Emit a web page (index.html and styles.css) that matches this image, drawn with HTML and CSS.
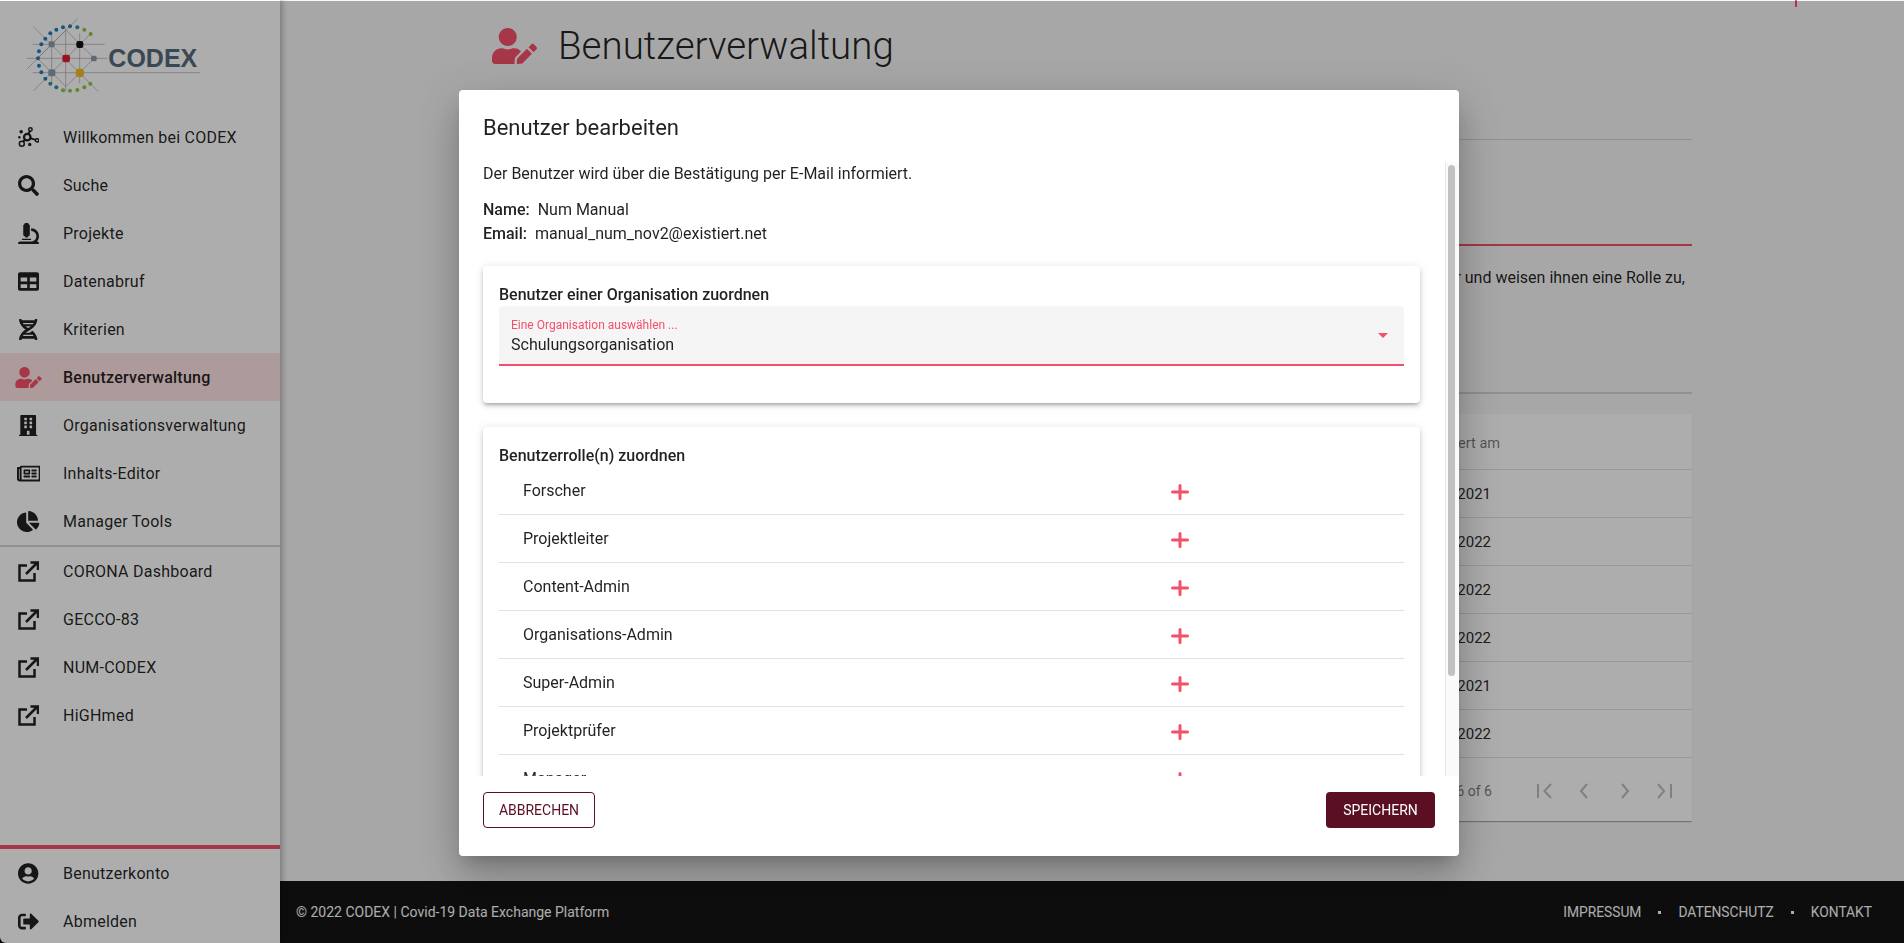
FILE: index.html
```html
<!DOCTYPE html>
<html lang="de">
<head>
<meta charset="utf-8">
<title>Benutzerverwaltung</title>
<link rel="stylesheet" href="styles.css">
</head>
<body>
<svg class="defs" aria-hidden="true">
  <symbol id="i-ext" viewBox="0 0 21 21"><path class="line" d="M9 4.5H1.5V19.5H16.5V12M8 13L19.5 1.5M12.5 1.5H20V9"/></symbol>
  <symbol id="i-plus" viewBox="0 0 18 16"><path class="line-plus" d="M9 1.5v13M1.5 8h15"/></symbol>
  <symbol id="i-useredit" viewBox="0 0 640 512"><path d="M224 256c70.7 0 128-57.3 128-128S294.7 0 224 0 96 57.3 96 128s57.3 128 128 128zm89.6 32h-16.7c-22.2 10.2-46.9 16-72.9 16s-50.6-5.8-72.9-16h-16.7C60.2 288 0 348.2 0 422.4V464c0 26.5 21.5 48 48 48h274.9c-2.4-6.8-3.4-14-2.6-21.3l6.8-60.9 1.2-11.1 7.9-7.9 77.3-77.3c-24.5-27.7-60-45.5-99.9-45.5zm45.3 145.3l-6.8 61c-1.1 10.2 7.5 18.8 17.6 17.6l60.9-6.8 137.9-137.9-71.7-71.7-137.9 137.8zM633 268.9L595.1 231c-9.3-9.3-24.5-9.3-33.8 0l-37.8 37.8-4.1 4.1 71.8 71.7 41.8-41.8c9.3-9.4 9.3-24.5 0-33.9z"/></symbol>
</svg>

<div class="app">
  <aside class="sidebar">
    <div class="logo">
      <svg class="logo-svg" viewBox="0 0 570 255">
        <g class="logo-lines">
          <path d="M38 88H254M20 130H262M38 173H540M95 60V205M137 40V230M179 55V205M40 35L235 230M172 12L20 163M40 228L212 56M138 45L222 130L138 215L52 130Z"/>
        </g>
        <g class="dot-blue">
          <circle cx="129" cy="37" r="6"/><circle cx="109" cy="44" r="6"/><circle cx="91" cy="55" r="6"/><circle cx="76" cy="71" r="6"/><circle cx="64" cy="88" r="6"/><circle cx="57" cy="109" r="6"/><circle cx="54" cy="130" r="6"/><circle cx="57" cy="152" r="6"/><circle cx="64" cy="172" r="6"/><circle cx="76" cy="191" r="6"/><circle cx="150" cy="34" r="6"/>
        </g>
        <g class="dot-teal">
          <circle cx="172" cy="37" r="6"/><circle cx="91" cy="206" r="6"/><circle cx="109" cy="217" r="6"/>
        </g>
        <g class="dot-green">
          <circle cx="193" cy="44" r="6"/><circle cx="212" cy="57" r="6"/><circle cx="129" cy="226" r="6"/><circle cx="150" cy="227" r="6"/><circle cx="172" cy="225" r="6"/><circle cx="193" cy="217" r="6"/><circle cx="211" cy="206" r="6"/>
        </g>
        <rect class="n-grey" x="86" y="79" width="18" height="18" rx="5"/>
        <rect class="n-black" x="169" y="78" width="21" height="21" rx="7"/>
        <rect class="n-red" x="127" y="119" width="23" height="23" rx="7"/>
        <rect class="n-grey" x="213" y="122" width="17" height="17" rx="5"/>
        <rect class="n-grey" x="85" y="163" width="21" height="21" rx="6"/>
        <rect class="n-yellow" x="167" y="161" width="25" height="25" rx="10"/>
        <text class="logo-text" x="265" y="155">CODEX</text>
      </svg>
    </div>

    <nav class="nav">
      <a class="nav-item">
        <span class="nav-icon">
          <svg class="ico-mol" viewBox="0 0 22 22">
            <path class="mol-line" d="M9.7 10.7L13 2.5M9.7 10.7L20 14M9.7 10.7L4 17"/>
            <circle class="mol-ring" cx="9.7" cy="10.7" r="3.4"/><circle class="mol-ring-s" cx="13" cy="2.7" r="1.8"/><circle class="mol-ring-s" cx="20" cy="14" r="1.8"/><circle class="mol-ring-s" cx="4" cy="17.5" r="2.6"/>
            <circle cx="3.3" cy="5" r="1.9"/><circle cx="1.4" cy="10.7" r="1.3"/><circle cx="12.3" cy="18.3" r="1.8"/>
          </svg>
        </span>Willkommen bei CODEX</a>
      <a class="nav-item">
        <span class="nav-icon"><svg class="ico" viewBox="0 0 512 512"><path d="M505 442.7L405.3 343c-4.5-4.5-10.6-7-17-7H372c27.6-35.3 44-79.7 44-128C416 93.1 322.9 0 208 0S0 93.1 0 208s93.1 208 208 208c48.3 0 92.7-16.4 128-44v16.3c0 6.4 2.5 12.5 7 17l99.7 99.7c9.4 9.4 24.6 9.4 33.9 0l28.3-28.3c9.4-9.4 9.4-24.6.1-34zM208 336c-70.7 0-128-57.2-128-128 0-70.7 57.2-128 128-128 70.7 0 128 57.2 128 128 0 70.7-57.2 128-128 128z"/></svg></span>Suche</a>
      <a class="nav-item">
        <span class="nav-icon"><svg class="ico" viewBox="0 0 512 512"><path d="M160 320h12v16c0 8.84 7.16 16 16 16h40c8.84 0 16-7.16 16-16v-16h12c17.67 0 32-14.33 32-32V64c0-17.67-14.33-32-32-32V16c0-8.84-7.16-16-16-16h-64c-8.84 0-16 7.16-16 16v16c-17.67 0-32 14.33-32 32v224c0 17.67 14.33 32 32 32zm304 128h-1.29C493.24 413.99 512 369.2 512 320c0-105.88-86.12-192-192-192v64c70.58 0 128 57.42 128 128s-57.42 128-128 128H48c-26.51 0-48 21.49-48 48 0 8.84 7.16 16 16 16h480c8.84 0 16-7.16 16-16 0-26.51-21.49-48-48-48zm-360-32h208c4.42 0 8-3.58 8-8v-16c0-4.42-3.58-8-8-8H104c-4.42 0-8 3.58-8 8v16c0 4.42 3.58 8 8 8z"/></svg></span>Projekte</a>
      <a class="nav-item">
        <span class="nav-icon"><svg class="ico" viewBox="0 0 512 512"><path d="M464 32H48C21.49 32 0 53.49 0 80v352c0 26.51 21.49 48 48 48h416c26.51 0 48-21.49 48-48V80c0-26.51-21.49-48-48-48zM224 416H64v-96h160v96zm0-160H64v-96h160v96zm224 160H288v-96h160v96zm0-160H288v-96h160v96z"/></svg></span>Datenabruf</a>
      <a class="nav-item">
        <span class="nav-icon"><svg class="ico" viewBox="0 0 448 512"><path d="M.1 494.1c-1.1 9.5 6.3 17.8 15.9 17.8l32.3.1c8.1 0 14.9-5.9 16-13.9.7-4.9 1.8-11.1 3.4-18.1H380c1.6 6.9 2.9 13.2 3.5 18.1 1.1 8 7.9 14 16 13.9l32.3-.1c9.6 0 17.1-8.3 15.9-17.8-4.6-37.9-25.6-129-118.9-207.7-17.6 12.4-37.1 24.2-58.5 35.4 6.2 4.6 11.4 9.4 17 14.2H159.7c21.3-18.1 47-35.6 78.7-51.4C410.5 199.1 442.1 65.8 447.9 17.9 449 8.4 441.6.1 432 .1L399.6 0c-8.1 0-14.9 5.9-16 13.9-.7 4.9-1.8 11.1-3.4 18.1H67.8c-1.6-7-2.7-13.1-3.4-18.1-1.1-8-7.9-14-16-13.9L16.1.1C6.5.1-1 8.4.1 17.9 5.3 60.8 31.4 171.8 160 256 31.5 340.2 5.3 451.2.1 494.1zM224 219.6c-25.1-13.7-46.4-28.4-64.3-43.6h128.5c-17.8 15.2-39.1 30-64.2 43.6zM355.1 96c-5.8 10.4-12.8 21.1-21 32H114c-8.3-10.9-15.3-21.6-21-32h262.1zM92.9 416c5.8-10.4 12.8-21.1 21-32h219.4c8.3 10.9 15.4 21.6 21.2 32H92.9z"/></svg></span>Kriterien</a>
      <a class="nav-item is-active">
        <span class="nav-icon"><svg class="ico ico-accent"><use href="#i-useredit"/></svg></span>Benutzerverwaltung</a>
      <a class="nav-item">
        <span class="nav-icon"><svg class="ico" viewBox="0 0 448 512"><path d="M436 480h-20V24c0-13.255-10.745-24-24-24H56C42.745 0 32 10.745 32 24v456H12c-6.627 0-12 5.373-12 12v20h448v-20c0-6.627-5.373-12-12-12zM128 76c0-6.627 5.373-12 12-12h40c6.627 0 12 5.373 12 12v40c0 6.627-5.373 12-12 12h-40c-6.627 0-12-5.373-12-12V76zm0 96c0-6.627 5.373-12 12-12h40c6.627 0 12 5.373 12 12v40c0 6.627-5.373 12-12 12h-40c-6.627 0-12-5.373-12-12v-40zm52 148h-40c-6.627 0-12-5.373-12-12v-40c0-6.627 5.373-12 12-12h40c6.627 0 12 5.373 12 12v40c0 6.627-5.373 12-12 12zm76 160h-64v-84c0-6.627 5.373-12 12-12h40c6.627 0 12 5.373 12 12v84zm64-172c0 6.627-5.373 12-12 12h-40c-6.627 0-12-5.373-12-12v-40c0-6.627 5.373-12 12-12h40c6.627 0 12 5.373 12 12v40zm0-96c0 6.627-5.373 12-12 12h-40c-6.627 0-12-5.373-12-12v-40c0-6.627 5.373-12 12-12h40c6.627 0 12 5.373 12 12v40zm0-96c0 6.627-5.373 12-12 12h-40c-6.627 0-12-5.373-12-12V76c0-6.627 5.373-12 12-12h40c6.627 0 12 5.373 12 12v40z"/></svg></span>Organisationsverwaltung</a>
      <a class="nav-item">
        <span class="nav-icon"><svg class="ico" viewBox="0 0 576 512"><path d="M552 64H112c-20.858 0-38.643 13.377-45.248 32H24c-13.255 0-24 10.745-24 24v272c0 30.928 25.072 56 56 56h496c13.255 0 24-10.745 24-24V88c0-13.255-10.745-24-24-24zM48 392V144h16v248c0 4.411-3.589 8-8 8s-8-3.589-8-8zm480 8H111.422c.374-2.614.578-5.283.578-8V112h416v288zM172 280h136c6.627 0 12-5.373 12-12v-96c0-6.627-5.373-12-12-12H172c-6.627 0-12 5.373-12 12v96c0 6.627 5.373 12 12 12zm28-80h80v40h-80v-40zm-40 140v-24c0-6.627 5.373-12 12-12h136c6.627 0 12 5.373 12 12v24c0 6.627-5.373 12-12 12H172c-6.627 0-12-5.373-12-12zm192 0v-24c0-6.627 5.373-12 12-12h104c6.627 0 12 5.373 12 12v24c0 6.627-5.373 12-12 12H364c-6.627 0-12-5.373-12-12zm0-144v-24c0-6.627 5.373-12 12-12h104c6.627 0 12 5.373 12 12v24c0 6.627-5.373 12-12 12H364c-6.627 0-12-5.373-12-12zm0 72v-24c0-6.627 5.373-12 12-12h104c6.627 0 12 5.373 12 12v24c0 6.627-5.373 12-12 12H364c-6.627 0-12-5.373-12-12z"/></svg></span>Inhalts-Editor</a>
      <a class="nav-item">
        <span class="nav-icon"><svg class="ico" viewBox="0 0 544 512"><path d="M527.79 288H290.5l158.03 158.03c6.04 6.04 15.98 6.53 22.19.68 38.7-36.46 65.32-85.61 73.13-140.86 1.34-9.46-6.51-17.85-16.06-17.85zm-15.83-64.8C503.72 103.74 408.26 8.28 288.8.04 279.68-.59 272 7.1 272 16.24V240h223.77c9.14 0 16.82-7.68 16.19-16.8zM224 288V50.71c0-9.55-8.39-17.4-17.84-16.06C86.99 51.49-4.1 155.6.14 280.37 4.5 408.51 114.83 513.59 243.03 511.98c50.4-.63 96.97-16.87 135.26-44.03 7.9-5.6 8.42-17.23 1.57-24.08L224 288z"/></svg></span>Manager Tools</a>
    </nav>

    <nav class="nav nav-external">
      <a class="nav-item"><span class="nav-icon"><svg class="ico-ext"><use href="#i-ext"/></svg></span>CORONA Dashboard</a>
      <a class="nav-item"><span class="nav-icon"><svg class="ico-ext"><use href="#i-ext"/></svg></span>GECCO-83</a>
      <a class="nav-item"><span class="nav-icon"><svg class="ico-ext"><use href="#i-ext"/></svg></span>NUM-CODEX</a>
      <a class="nav-item"><span class="nav-icon"><svg class="ico-ext"><use href="#i-ext"/></svg></span>HiGHmed</a>
    </nav>

    <nav class="nav nav-account">
      <a class="nav-item"><span class="nav-icon"><svg class="ico" viewBox="0 0 496 512"><path d="M248 8C111 8 0 119 0 256s111 248 248 248 248-111 248-248S385 8 248 8zm0 96c48.6 0 88 39.4 88 88s-39.4 88-88 88-88-39.4-88-88 39.4-88 88-88zm0 344c-58.7 0-111.3-26.6-146.5-68.2 18.8-35.4 55.6-59.8 98.5-59.8 2.4 0 4.8.4 7.1 1.1 13 4.2 26.6 6.9 40.9 6.9 14.3 0 28-2.7 40.9-6.9 2.3-.7 4.7-1.1 7.1-1.1 42.9 0 79.7 24.4 98.5 59.8C359.3 421.4 306.7 448 248 448z"/></svg></span>Benutzerkonto</a>
      <a class="nav-item"><span class="nav-icon"><svg class="ico" viewBox="0 0 512 512"><path d="M497 273L329 441c-15 15-41 4.5-41-17v-96H152c-13.3 0-24-10.7-24-24v-96c0-13.3 10.7-24 24-24h136V88c0-21.4 25.9-32 41-17l168 168c9.3 9.4 9.3 24.6 0 34zM192 436v-40c0-6.6-5.4-12-12-12H96c-17.7 0-32-14.3-32-32V160c0-17.7 14.3-32 32-32h84c6.6 0 12-5.4 12-12V76c0-6.6-5.4-12-12-12H96c-53 0-96 43-96 96v192c0 53 43 96 96 96h84c6.6 0 12-5.4 12-12z"/></svg></span>Abmelden</a>
    </nav>
  </aside>

  <div class="main">
    <span class="top-mark"></span>
    <main class="content">
      <header class="page-head">
        <svg class="page-icon"><use href="#i-useredit"/></svg>
        <h1 class="page-title">Benutzerverwaltung</h1>
      </header>
      <div class="tabs"></div>
      <div class="intro">
        <p class="intro-text">Hier verwalten Sie alle registrierten Benutzer, ordnen sie einer Organisation zu, aktivieren oder deaktivieren Benutzer und weisen ihnen eine Rolle zu,</p>
      </div>
      <section class="table">
        <div class="t-head">Aktiviert am</div>
        <div class="t-row">12.11.2021</div>
        <div class="t-row">14.01.2022</div>
        <div class="t-row">20.01.2022</div>
        <div class="t-row">24.02.2022</div>
        <div class="t-row">30.11.2021</div>
        <div class="t-row">08.03.2022</div>
        <div class="t-foot">
          <span class="t-range">1 – 6 of 6</span>
          <svg class="pager" viewBox="0 0 136 16">
            <path d="M1 1V15M14 1L7.5 8L14 15M50 1L44 8L50 15M85 1L91 8L85 15M121 1L127 8L121 15M134 1V15"/>
          </svg>
        </div>
      </section>
    </main>
    <footer class="footer">
      <span>© 2022 CODEX | Covid-19 Data Exchange Platform</span>
      <span class="foot-links">
        <a>IMPRESSUM</a><i class="foot-dot"></i><a>DATENSCHUTZ</a><i class="foot-dot"></i><a>KONTAKT</a>
      </span>
    </footer>
  </div>
</div>

<div class="backdrop"></div>

<div class="dialog" role="dialog">
  <h2 class="dialog-title">Benutzer bearbeiten</h2>
  <div class="dialog-main">
    <div class="dialog-body">
      <p class="notice">Der Benutzer wird über die Bestätigung per E-Mail informiert.</p>
      <div class="user-line"><b>Name:</b>&nbsp; Num Manual</div>
      <div class="user-line"><b>Email:</b>&nbsp; manual_num_nov2@existiert.net</div>

      <section class="card card-org">
        <h3 class="card-title">Benutzer einer Organisation zuordnen</h3>
        <div class="select">
          <div class="select-text">
            <div class="select-label">Eine Organisation auswählen ...</div>
            <div class="select-value">Schulungsorganisation</div>
          </div>
          <span class="select-arrow"></span>
        </div>
      </section>

      <section class="card card-roles">
        <h3 class="card-title">Benutzerrolle(n) zuordnen</h3>
        <div class="role"><span class="role-name">Forscher</span><svg class="role-plus"><use href="#i-plus"/></svg></div>
        <div class="role"><span class="role-name">Projektleiter</span><svg class="role-plus"><use href="#i-plus"/></svg></div>
        <div class="role"><span class="role-name">Content-Admin</span><svg class="role-plus"><use href="#i-plus"/></svg></div>
        <div class="role"><span class="role-name">Organisations-Admin</span><svg class="role-plus"><use href="#i-plus"/></svg></div>
        <div class="role"><span class="role-name">Super-Admin</span><svg class="role-plus"><use href="#i-plus"/></svg></div>
        <div class="role"><span class="role-name">Projektprüfer</span><svg class="role-plus"><use href="#i-plus"/></svg></div>
        <div class="role"><span class="role-name">Manager</span><svg class="role-plus"><use href="#i-plus"/></svg></div>
      </section>
    </div>
    <div class="scroll-track"><div class="scroll-thumb"></div></div>
  </div>
  <div class="dialog-actions">
    <button class="btn btn-outline">ABBRECHEN</button>
    <button class="btn btn-solid">SPEICHERN</button>
  </div>
</div>
</body>
</html>
```
FILE: styles.css
```css
* { box-sizing: border-box; }

html, body {
  margin: 0;
  height: 943px;
  overflow: hidden;
}

body {
  font-family: Roboto, "Liberation Sans", sans-serif;
  font-size: 16px;
  color: rgba(0, 0, 0, 0.87);
  background: #000;
}

.defs { position: absolute; width: 0; height: 0; }
.line { fill: none; stroke: currentColor; stroke-width: 2.5; }
.line-plus { fill: none; stroke: currentColor; stroke-width: 3; stroke-linecap: round; }

.app { display: flex; height: 943px; }

/* Sidebar */
.sidebar {
  width: 280px;
  flex: none;
  height: 943px;
  overflow: hidden;
  background: #fff;
  border-bottom-left-radius: 6px;
  box-shadow: 2px 0 6px rgba(0, 0, 0, 0.3);
  position: relative;
  z-index: 2;
}

.logo { height: 113px; padding: 15px 0 0 20px; }
.logo-svg { display: block; width: 190px; height: 85px; }
.logo-lines path { fill: none; stroke: #a8a8ae; stroke-width: 2; }
.dot-blue { fill: #1f7fbd; }
.dot-teal { fill: #2f94a0; }
.dot-green { fill: #8dc63f; }
.n-grey { fill: #8e9cab; }
.n-black { fill: #111; }
.n-red { fill: #e0202c; }
.n-yellow { fill: #f0c020; }
.logo-text { font-family: "Liberation Sans", sans-serif; font-weight: 700; font-size: 75px; fill: #566a7c; }

.nav-item {
  display: flex;
  align-items: center;
  height: 48px;
  font-size: 16px;
  letter-spacing: 0.25px;
  white-space: nowrap;
}
.nav-icon {
  width: 63px;
  flex: none;
  display: flex;
  justify-content: center;
  padding-right: 6px;
}
.is-active {
  background: #ffe3e4;
  font-weight: 500;
}
.ico { height: 21px; width: auto; max-width: 28px; fill: currentColor; display: block; }
.ico-accent { width: 27px; color: #f5506a; }
.ico-mol { width: 21px; height: 21px; fill: currentColor; display: block; }
.mol-line { stroke: currentColor; stroke-width: 2; fill: none; }
.mol-ring { fill: #fff; stroke: currentColor; stroke-width: 2.4; }
.mol-ring-s { fill: #fff; stroke: currentColor; stroke-width: 1.6; }
.ico-ext { width: 21px; height: 21px; display: block; }

.nav-external { border-top: 2px solid #d4d4d4; }
.nav-account { margin-top: 106px; border-top: 4px solid #f5506a; }

/* Main */
.main {
  flex: 1;
  min-width: 0;
  display: flex;
  flex-direction: column;
  background: #f7f7f7;
  position: relative;
}
.top-mark {
  position: absolute;
  top: 0;
  left: 1515px;
  width: 2px;
  height: 7px;
  background: #f5506a;
}
.content {
  flex: 1;
  min-height: 0;
  width: 1200px;
  margin: 0 auto;
}
.page-head {
  display: flex;
  align-items: center;
  height: 140px;
  padding: 28px 0 76px;
  gap: 21px;
  border-bottom: 1px solid #d4d4d4;
}
.page-icon { width: 45px; height: 36px; color: #f5506a; fill: currentColor; }
.page-title { margin: 0; font-size: 38.5px; font-weight: 300; line-height: 36px; }
.tabs { height: 106px; border-bottom: 2px solid #f5506a; }
.intro {
  height: 148px;
  padding-top: 20px;
  border-bottom: 2px solid #d4d4d4;
}
.intro-text {
  margin: 0;
  line-height: 24px;
  font-size: 16px;
  white-space: nowrap;
  text-align: right;
  padding-right: 7px;
}
.table {
  margin-top: 20px;
  background: #fff;
  box-shadow: 0 2px 1px -1px rgba(0, 0, 0, 0.2), 0 1px 1px rgba(0, 0, 0, 0.14);
}
.t-head, .t-row {
  text-align: right;
  border-bottom: 1px solid #e0e0e0;
}
.t-head {
  height: 56px;
  line-height: 59px;
  font-size: 14.5px;
  color: rgba(0, 0, 0, 0.54);
  padding-right: 192px;
}
.t-row {
  height: 48px;
  line-height: 48px;
  font-size: 15px;
  padding-right: 201px;
}
.t-foot {
  height: 63px;
  display: flex;
  align-items: center;
  padding: 3px 0 0 900px;
  font-size: 14px;
  color: rgba(0, 0, 0, 0.54);
}
.t-range { width: 100px; text-align: right; white-space: nowrap; }
.pager {
  width: 136px;
  height: 16px;
  margin-left: 45px;
  fill: none;
  stroke: rgba(0, 0, 0, 0.26);
  stroke-width: 2;
}

/* Footer */
.footer {
  height: 62px;
  flex: none;
  display: flex;
  align-items: center;
  justify-content: space-between;
  padding: 0 32px 0 16px;
  background: #141414;
  color: #fff;
  font-size: 14px;
}
.foot-links { display: flex; align-items: center; gap: 17px; font-size: 13.8px; }
.foot-dot { width: 3px; height: 3px; background: #fff; }

/* Backdrop and dialog */
.backdrop {
  position: fixed;
  inset: 1px 0 0 0;
  background: rgba(0, 0, 0, 0.32);
  z-index: 5;
}
.dialog {
  position: fixed;
  left: 459px;
  top: 90px;
  width: 1000px;
  height: 766px;
  background: #fff;
  border-radius: 4px;
  display: flex;
  flex-direction: column;
  z-index: 6;
  box-shadow: 0 11px 15px -7px rgba(0, 0, 0, 0.2), 0 24px 38px 3px rgba(0, 0, 0, 0.14), 0 9px 46px 8px rgba(0, 0, 0, 0.12);
}
.dialog-title {
  flex: none;
  height: 72px;
  margin: 0;
  padding: 22px 24px 0;
  font-size: 22px;
  font-weight: 400;
  line-height: 32px;
}
.dialog-main {
  flex: 1;
  min-height: 0;
  display: flex;
}
.dialog-body {
  flex: 1;
  min-width: 0;
  overflow: hidden;
  padding: 2px 25px 0 24px;
}
.scroll-track {
  width: 14px;
  flex: none;
  padding: 3px 4px 0 2px;
  background: #fafafa;
  border-left: 1px solid #e8e8e8;
}
.scroll-thumb { height: 511px; background: #c1c1c1; border-radius: 4px; }

.notice { margin: 0 0 14px; line-height: 20px; }
.user-line { line-height: 24px; }
.user-line b { font-weight: 500; }

.card {
  background: #fff;
  border-radius: 4px;
  padding: 16px;
  box-shadow: 0 3px 3px -2px rgba(0, 0, 0, 0.2), 0 3px 4px rgba(0, 0, 0, 0.14), 0 1px 8px rgba(0, 0, 0, 0.12);
}
.card-org { margin-top: 20px; height: 137px; }
.card-roles { margin-top: 24px; }
.card-title { margin: 0; height: 24px; padding-top: 1px; font-size: 16px; font-weight: 500; line-height: 24px; }

.select {
  height: 60px;
  display: flex;
  align-items: center;
  justify-content: space-between;
  padding: 4px 16px 0 12px;
  background: #f5f5f5;
  border-bottom: 2px solid #f4506a;
  border-radius: 4px 4px 0 0;
}
.select-label { font-size: 12px; line-height: 14px; color: #f4506a; }
.select-value { font-size: 16px; line-height: 22px; margin-top: 2px; }
.select-arrow {
  width: 0;
  height: 0;
  margin-top: -4px;
  border-left: 5px solid transparent;
  border-right: 5px solid transparent;
  border-top: 5px solid #f4506a;
}

.role {
  display: flex;
  align-items: center;
  height: 48px;
  padding-left: 24px;
  border-bottom: 1px solid #e0e0e0;
}
.role-name { width: 648px; }
.role-plus { width: 18px; height: 16px; margin-top: 3px; color: #f4506a; }

.dialog-actions {
  flex: none;
  height: 80px;
  padding: 16px 24px 0;
  display: flex;
  justify-content: space-between;
  align-items: flex-start;
}
.btn {
  height: 36px;
  border-radius: 4px;
  font-family: inherit;
  font-size: 14px;
}
.btn-outline { width: 112px; background: #fff; color: #5a0f23; border: 1px solid #5a0f23; }
.btn-solid { width: 109px; background: #5a0f23; color: #fff; border: 0; }
```
